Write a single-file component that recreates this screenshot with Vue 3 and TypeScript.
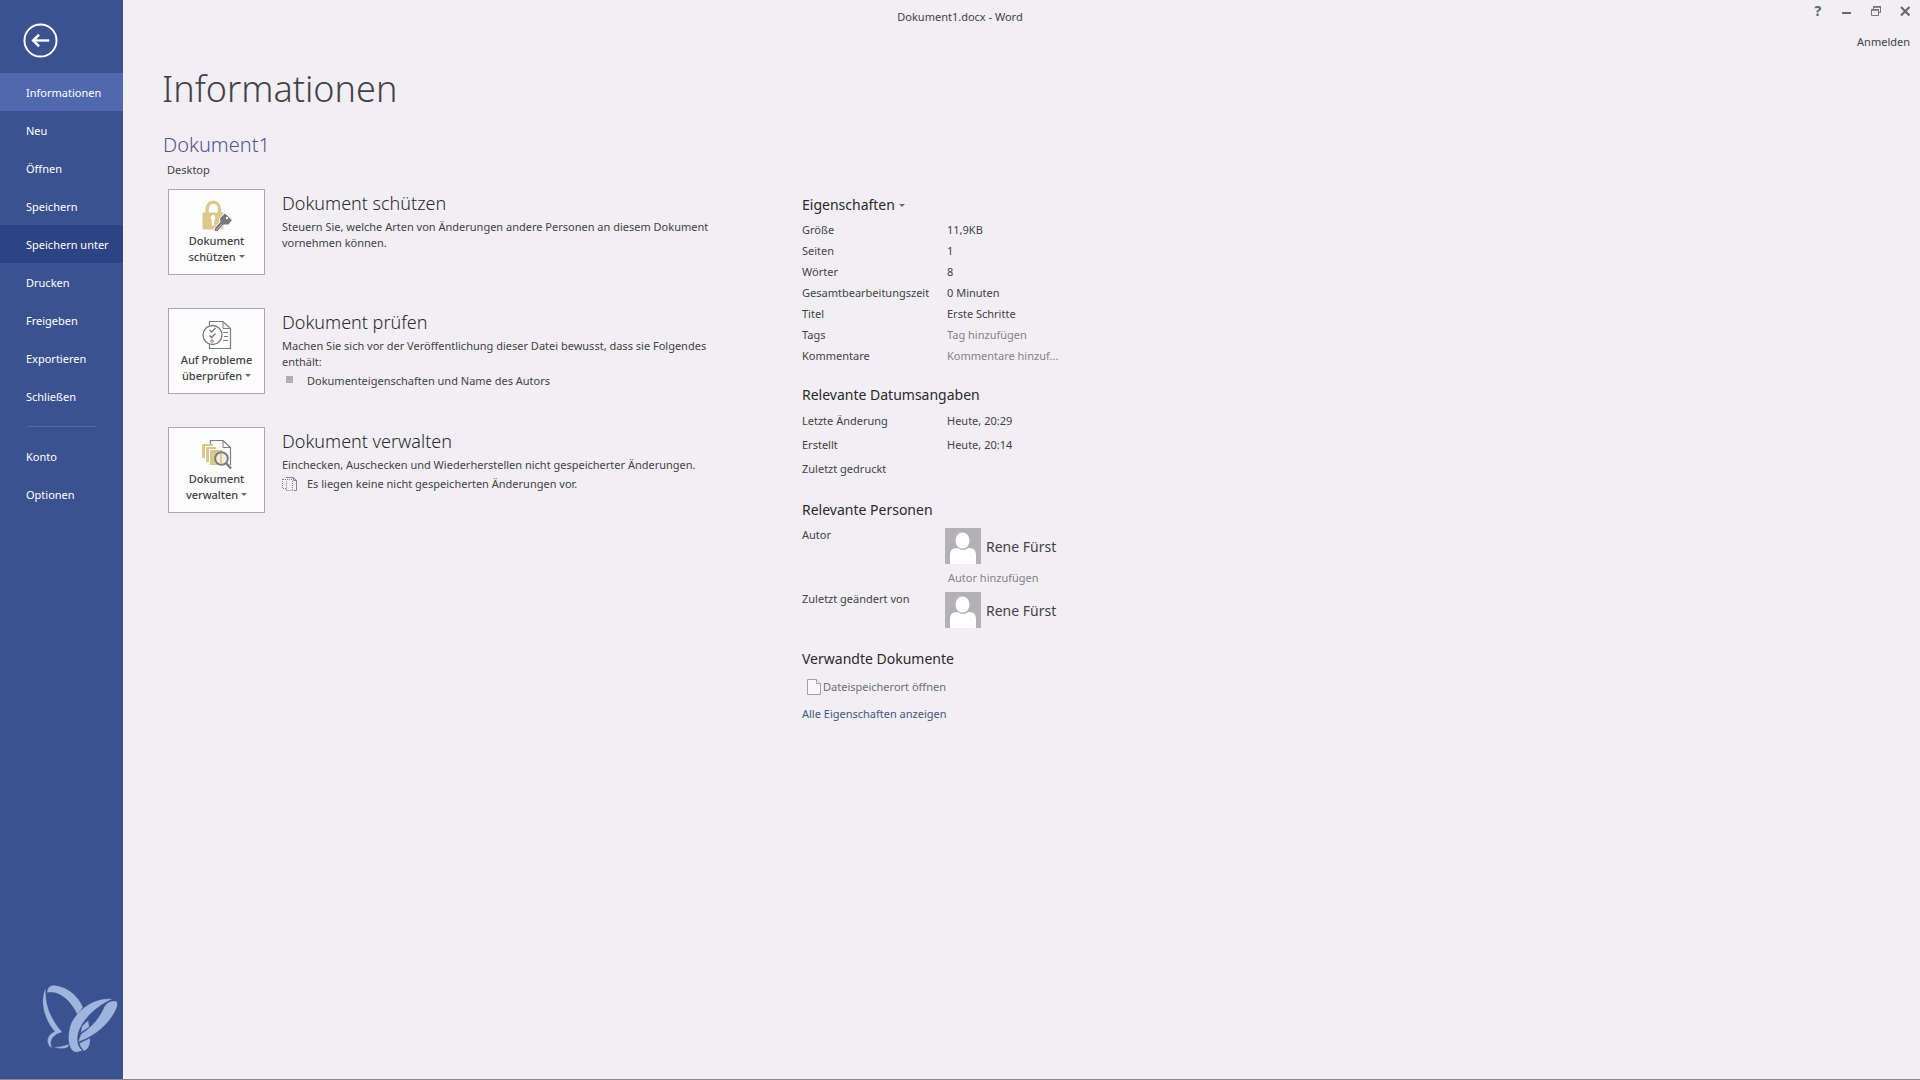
<script setup lang="ts">
import { ref } from 'vue'

interface NavEntry {
  label: string
  state?: 'active' | 'hover'
}

const mainNav: NavEntry[] = [
  { label: 'Informationen', state: 'active' },
  { label: 'Neu' },
  { label: 'Öffnen' },
  { label: 'Speichern' },
  { label: 'Speichern unter', state: 'hover' },
  { label: 'Drucken' },
  { label: 'Freigeben' },
  { label: 'Exportieren' },
  { label: 'Schließen' },
]
const appNav: NavEntry[] = [{ label: 'Konto' }, { label: 'Optionen' }]

const facts = [
  { label: 'Größe', value: '11,9KB' },
  { label: 'Seiten', value: '1' },
  { label: 'Wörter', value: '8' },
  { label: 'Gesamtbearbeitungszeit', value: '0 Minuten' },
]
const dates = [
  { label: 'Letzte Änderung', value: 'Heute, 20:29' },
  { label: 'Erstellt', value: 'Heute, 20:14' },
  { label: 'Zuletzt gedruckt', value: '' },
]

const title = ref('Erste Schritte')
const tags = ref('')
const comments = ref('')
const newAuthor = ref('')
</script>

<template>
  <div class="backstage">
    <aside class="sidebar">
      <button class="back" type="button" aria-label="Zurück">
        <svg width="35" height="35" viewBox="0 0 36 36" fill="none" stroke="#fff">
          <circle cx="18" cy="18" r="16.5" stroke-width="2" />
          <path d="M27 18H11" stroke-width="2.4" />
          <path d="M16.5 12L10.5 18L16.5 24" stroke-width="2.6" />
        </svg>
      </button>
      <nav>
        <button
          v-for="item in mainNav"
          :key="item.label"
          type="button"
          class="nav-item"
          :class="item.state"
        >{{ item.label }}</button>
        <hr class="nav-line" />
        <button v-for="item in appNav" :key="item.label" type="button" class="nav-item">{{ item.label }}</button>
      </nav>
      <svg class="logo" width="80" height="72" viewBox="120 66 240 216">
        <g fill="#a0b5dd" stroke="#35487f" stroke-width="1">
          <path d="M136 84C126 110 126 138 136 166C144 188 154 204 164 214C148 222 140 236 143 248C145 256 150 262 157 264C150 252 152 236 164 227C172 221 180 219 187 217C164 190 146 160 140 126C137 108 138 96 136 84Z" />
          <path d="M141 98C142 82 151 75 164 76C204 80 236 110 249 142L233 166C216 130 188 98 152 97Z" />
          <path d="M161 261C174 267 192 267 204 262L207 252C192 258 176 261 161 261Z" />
          <path d="M265 181L246 198L242 218L268 201Z" />
          <path d="M270 234L238 250C240 258 244 266 252 273C266 268 272 252 270 234Z" />
          <path d="M338 117C290 110 238 142 214 188C201 222 202 264 222 275C230 278 240 276 248 271C232 262 230 238 235 218C246 182 284 140 338 117Z" />
          <path d="M350 124C336 120 322 126 314 138C298 176 272 204 243 222L234 246C280 232 330 192 350 144C353 134 353 128 350 124Z" />
        </g>
      </svg>
    </aside>

    <main class="content">
      <header class="titlebar">
        <span class="caption">Dokument1.docx - Word</span>
        <div class="window-tools">
          <div class="window-buttons">
            <button type="button" class="help" aria-label="Hilfe">?</button>
            <button type="button" aria-label="Minimieren">
              <svg width="12" height="12" viewBox="0 0 12 12"><path d="M1 8H10" stroke="#6a686c" stroke-width="2" /></svg>
            </button>
            <button type="button" aria-label="Wiederherstellen">
              <svg width="12" height="12" viewBox="0 0 12 12" fill="none" stroke="#77757a">
                <path d="M3.5 4V1.5H10.500V7.500H8.500" />
                <path d="M3 2H11" stroke-width="1.600" />
                <path d="M1.500 4.500H8.500V10.500H1.500Z" />
                <path d="M1 5H9" stroke-width="1.600" />
              </svg>
            </button>
            <button type="button" aria-label="Schließen">
              <svg width="12" height="12" viewBox="0 0 12 12"><path d="M2 2L10.500 10.500M10.500 2L2 10.500" stroke="#6a686c" stroke-width="2.200" /></svg>
            </button>
          </div>
          <a class="signin" href="#">Anmelden</a>
        </div>
      </header>

      <h1>Informationen</h1>
      <h2>Dokument1</h2>
      <p class="path">Desktop</p>

      <div class="columns">
        <div class="tasks">
          <section class="task">
            <button type="button" class="tile">
              <svg width="32" height="32" viewBox="0 0 32 32">
                <path d="M6 14V10C6 -0.500 18.500 -0.500 18.500 10V14" fill="none" stroke="#dcc88d" stroke-width="3.400" />
                <path d="M1.500 12.500H22.500V28Q22.500 29.500 21 29.500H3Q1.500 29.500 1.500 28Z" fill="#dcc88d" />
                <path d="M10 18.500A2.300 2.300 0 1 1 14 18.500L13.300 20V25.500H10.700V20Z" fill="#fff" />
                <path d="M24 13L31.500 20L27.500 25L22.500 25L16.500 31.500L13 31.500L13.500 28L19 22L18.500 18Z" fill="#7d797b" stroke="#fff" stroke-width="1" />
                <path d="M15 30L21 24" stroke="#b4afb1" stroke-width="1" />
                <circle cx="26" cy="18" r="1.200" fill="#fff" />
              </svg>
              <span>Dokument<br />schützen <i class="caret"></i></span>
            </button>
            <div class="task-text">
              <h3>Dokument schützen</h3>
              <p>Steuern Sie, welche Arten von Änderungen andere Personen an diesem Dokument vornehmen können.</p>
            </div>
          </section>

          <section class="task">
            <button type="button" class="tile">
              <svg width="32" height="32" viewBox="0 0 32 32" fill="none" stroke="#7d7b7e">
                <path d="M8.500 6V2.500H22L29.500 9.500V29.500H8.500V24" stroke-width="1.200" />
                <path d="M22 2.500V9.500H29.500" />
                <path d="M22 13.500H27M23 17.500H27M22 21.500H27" />
                <circle cx="11.500" cy="16" r="9.500" fill="#fff" stroke-width="1.300" />
                <path d="M8.500 11L10.500 13L14.500 9" stroke-width="1.500" />
                <path d="M8.500 16.500L10.500 18.500L14.500 14.500" stroke="#a8625f" stroke-width="1.500" />
                <circle cx="11" cy="22" r="1.300" />
              </svg>
              <span>Auf Probleme<br />überprüfen <i class="caret"></i></span>
            </button>
            <div class="task-text">
              <h3>Dokument prüfen</h3>
              <p>Machen Sie sich vor der Veröffentlichung dieser Datei bewusst, dass sie Folgendes enthält:</p>
              <div class="note">
                <span class="note-icon"><i class="square"></i></span>
                <span>Dokumenteigenschaften und Name des Autors</span>
              </div>
            </div>
          </section>

          <section class="task">
            <button type="button" class="tile">
              <svg width="32" height="32" viewBox="0 0 32 32" fill="none">
                <path d="M9.500 6V2.500H22L29.500 9.500V27" stroke="#7d7b7e" stroke-width="1.200" />
                <path d="M22 2.500V9.500H29.500" stroke="#7d7b7e" />
                <path d="M1 6H12V8H4V20H1Z" fill="#d9c98f" />
                <path d="M5 9H15V11H8V24H5Z" fill="#d9c98f" />
                <path d="M9 12H21V27H9Z" fill="#d9c98f" />
                <circle cx="20.500" cy="20.500" r="6.300" fill="#f5efd9" stroke="#7d7b7e" stroke-width="2" />
                <path d="M19 16H21V25H19Z" fill="#d9c98f" />
                <path d="M25 25L30 30.500" stroke="#7d7b7e" stroke-width="2.600" />
              </svg>
              <span>Dokument<br />verwalten <i class="caret"></i></span>
            </button>
            <div class="task-text">
              <h3>Dokument verwalten</h3>
              <p>Einchecken, Auschecken und Wiederherstellen nicht gespeicherter Änderungen.</p>
              <div class="note">
                <span class="note-icon">
                  <svg width="16" height="16" viewBox="0 0 16 16" fill="none" stroke="#858387">
                    <path d="M4 1.500H11.500L14.500 4.500V14.500H12" />
                    <path d="M11.500 1.500V4.500H14.500" />
                    <path d="M.5 3V12.500M4.500 5.500V14.500M1 3.500H10.500M4.500 14.500H11M10.500 5V14M1 12.500H4" stroke-dasharray="1 1" />
                  </svg>
                </span>
                <span>Es liegen keine nicht gespeicherten Änderungen vor.</span>
              </div>
            </div>
          </section>
        </div>

        <div class="properties">
          <section>
            <h4><button type="button" class="prop-menu">Eigenschaften <i class="caret"></i></button></h4>
            <table>
              <tbody>
                <tr v-for="fact in facts" :key="fact.label">
                  <th scope="row">{{ fact.label }}</th>
                  <td>{{ fact.value }}</td>
                </tr>
                <tr>
                  <th scope="row"><label for="doc-title">Titel</label></th>
                  <td><input id="doc-title" v-model="title" type="text" /></td>
                </tr>
                <tr>
                  <th scope="row"><label for="doc-tags">Tags</label></th>
                  <td><input id="doc-tags" v-model="tags" type="text" placeholder="Tag hinzufügen" /></td>
                </tr>
                <tr>
                  <th scope="row"><label for="doc-comments">Kommentare</label></th>
                  <td><input id="doc-comments" v-model="comments" type="text" placeholder="Kommentare hinzuf..." /></td>
                </tr>
              </tbody>
            </table>
          </section>

          <section>
            <h4>Relevante Datumsangaben</h4>
            <table class="dates">
              <tbody>
                <tr v-for="date in dates" :key="date.label">
                  <th scope="row">{{ date.label }}</th>
                  <td>{{ date.value }}</td>
                </tr>
              </tbody>
            </table>
          </section>

          <section>
            <h4>Relevante Personen</h4>
            <table class="people">
              <tbody>
                <tr>
                  <th scope="row"><label for="doc-author">Autor</label></th>
                  <td>
                    <div class="person">
                      <svg width="36" height="36" viewBox="0 0 36 36">
                        <path d="M0 0H36V36H0Z" fill="#b3b1b4" />
                        <path d="M5 36V27Q5 20 12 20H13Q18 24 23 20H24Q31 20 31 27V36Z" fill="#fff" />
                        <ellipse cx="17.500" cy="12.500" rx="7" ry="8" fill="#fff" />
                      </svg>
                      <span>Rene Fürst</span>
                    </div>
                    <input id="doc-author" v-model="newAuthor" type="text" placeholder="Autor hinzufügen" />
                  </td>
                </tr>
                <tr>
                  <th scope="row">Zuletzt geändert von</th>
                  <td>
                    <div class="person">
                      <svg width="36" height="36" viewBox="0 0 36 36">
                        <path d="M0 0H36V36H0Z" fill="#b3b1b4" />
                        <path d="M5 36V27Q5 20 12 20H13Q18 24 23 20H24Q31 20 31 27V36Z" fill="#fff" />
                        <ellipse cx="17.500" cy="12.500" rx="7" ry="8" fill="#fff" />
                      </svg>
                      <span>Rene Fürst</span>
                    </div>
                  </td>
                </tr>
              </tbody>
            </table>
          </section>

          <section>
            <h4>Verwandte Dokumente</h4>
            <a class="file-link" href="#">
              <svg width="14" height="16" viewBox="0 0 14 16" fill="#f8f7f9" stroke="#a19fa3">
                <path d="M.5 .5H9.500L13.500 4.500V15.500H.5Z" />
                <path d="M9.500 .5V4.500H13.500" />
              </svg>
              <span>Dateispeicherort öffnen</span>
            </a>
            <a class="all-link" href="#">Alle Eigenschaften anzeigen</a>
          </section>
        </div>
      </div>
    </main>
  </div>
</template>

<style>
body {
  margin: 0;
  background: #f1eff3;
}
</style>

<style scoped>
.backstage {
  display: flex;
  box-sizing: border-box;
  min-height: 100vh;
  border-bottom: 1px solid #88878c;
  background: #f1eff3;
  color: #444246;
  font: 11px/16px "Noto Sans", "Open Sans", sans-serif;
}
button,
input {
  margin: 0;
  padding: 0;
  border: 0;
  background: none;
  color: inherit;
  font: inherit;
}
a {
  color: inherit;
  text-decoration: none;
}
svg {
  display: block;
  flex: none;
}
h1, h2, h3, h4, p {
  margin: 0;
  font-weight: 400;
}

/* Sidebar */
.sidebar {
  display: flex;
  flex: 0 0 123px;
  flex-direction: column;
  background: #3b5291;
  color: #fff;
}
.back {
  width: 35px;
  margin: 23px 0 15px 23px;
}
.nav-item {
  display: block;
  width: 100%;
  height: 38px;
  padding: 2px 0 0 26px;
  text-align: left;
  white-space: nowrap;
}
.nav-item.active {
  background: #5068ad;
}
.nav-item.hover {
  background: #2c4483;
}
.nav-line {
  height: 1px;
  margin: 11px 27px 10px;
  border: 0;
  background: #5468a4;
}
.logo {
  margin: auto 0 25px 40px;
}

/* Title bar */
.content {
  flex: 1;
  min-width: 0;
}
.titlebar {
  display: grid;
  grid-template-columns: 1fr auto 1fr;
  height: 63px;
  padding-right: 9px;
}
.caption {
  grid-column: 2;
  margin-right: 114px;
  padding-top: 9px;
}
.window-tools {
  display: flex;
  flex-direction: column;
  align-items: flex-end;
  gap: 17px;
  padding-top: 5px;
}
.window-buttons {
  display: flex;
  gap: 17px;
}
.window-buttons button {
  width: 12px;
  height: 12px;
}
.window-buttons .help {
  color: #6a686c;
  font-size: 14px;
  font-weight: 800;
  line-height: 12px;
}
.signin {
  padding-right: 1px;
}

/* Document heading */
h1 {
  padding-left: 39px;
  font-size: 36px;
  font-weight: 300;
  line-height: 52px;
}
h2 {
  margin-top: 15px;
  padding-left: 40px;
  color: #555391;
  font-size: 20px;
  font-weight: 300;
  line-height: 30px;
}
.path {
  margin: 2px 0 11px;
  padding-left: 44px;
}
.columns {
  display: grid;
  grid-template-columns: minmax(0, 634px) minmax(0, 1fr);
  padding-left: 45px;
}

/* Document tasks */
.tasks {
  display: flex;
  flex-direction: column;
  gap: 33px;
}
.task {
  display: flex;
  gap: 17px;
}
.tile {
  display: flex;
  box-sizing: border-box;
  flex: 0 0 97px;
  flex-direction: column;
  align-items: center;
  gap: 1px;
  height: 86px;
  padding-top: 10px;
  border: 1px solid #aaa8ac;
  background: #fdfdfe;
  font-weight: 500;
}
.caret {
  display: inline-block;
  border: 3px solid transparent;
  border-top-color: #6a686c;
  border-bottom: 0;
  vertical-align: 3px;
}
.task-text {
  max-width: 450px;
  padding-top: 2px;
}
h3 {
  margin-bottom: 4px;
  font-size: 18px;
  font-weight: 300;
  line-height: 24px;
  color: #2b292d;
}
.note {
  display: flex;
  gap: 9px;
  margin-top: 3px;
}
.note-icon {
  width: 16px;
}
.square {
  display: block;
  width: 7px;
  height: 7px;
  margin: 3px 4px;
  background: #b0aeb2;
}

/* Properties */
.properties {
  display: flex;
  flex-direction: column;
  gap: 17px;
  padding-top: 5px;
}
h4 {
  margin-bottom: 3px;
  color: #2b292d;
  font-size: 14px;
  line-height: 22px;
}
.prop-menu {
  display: block;
}
table {
  margin-bottom: 1px;
  border-collapse: collapse;
  line-height: 21px;
}
th,
td {
  padding: 0;
  font-weight: 400;
  text-align: left;
  vertical-align: top;
}
th {
  width: 145px;
  white-space: nowrap;
}
input {
  display: block;
  width: 130px;
  height: 21px;
  line-height: 21px;
}
input::placeholder {
  color: #848287;
  opacity: 1;
}
.dates {
  line-height: 24px;
}
.people th {
  width: 143px;
}
.people input {
  margin-top: 1px;
  padding-left: 3px;
}
.person {
  display: flex;
  align-items: center;
  gap: 5px;
  padding: 4px 0 2px;
  font-size: 14px;
}
.file-link,
.all-link {
  display: flex;
  align-items: center;
  line-height: 27px;
}
.file-link {
  gap: 2px;
  padding-left: 5px;
  color: #6f6d72;
}
.all-link {
  color: #43597d;
}
</style>
